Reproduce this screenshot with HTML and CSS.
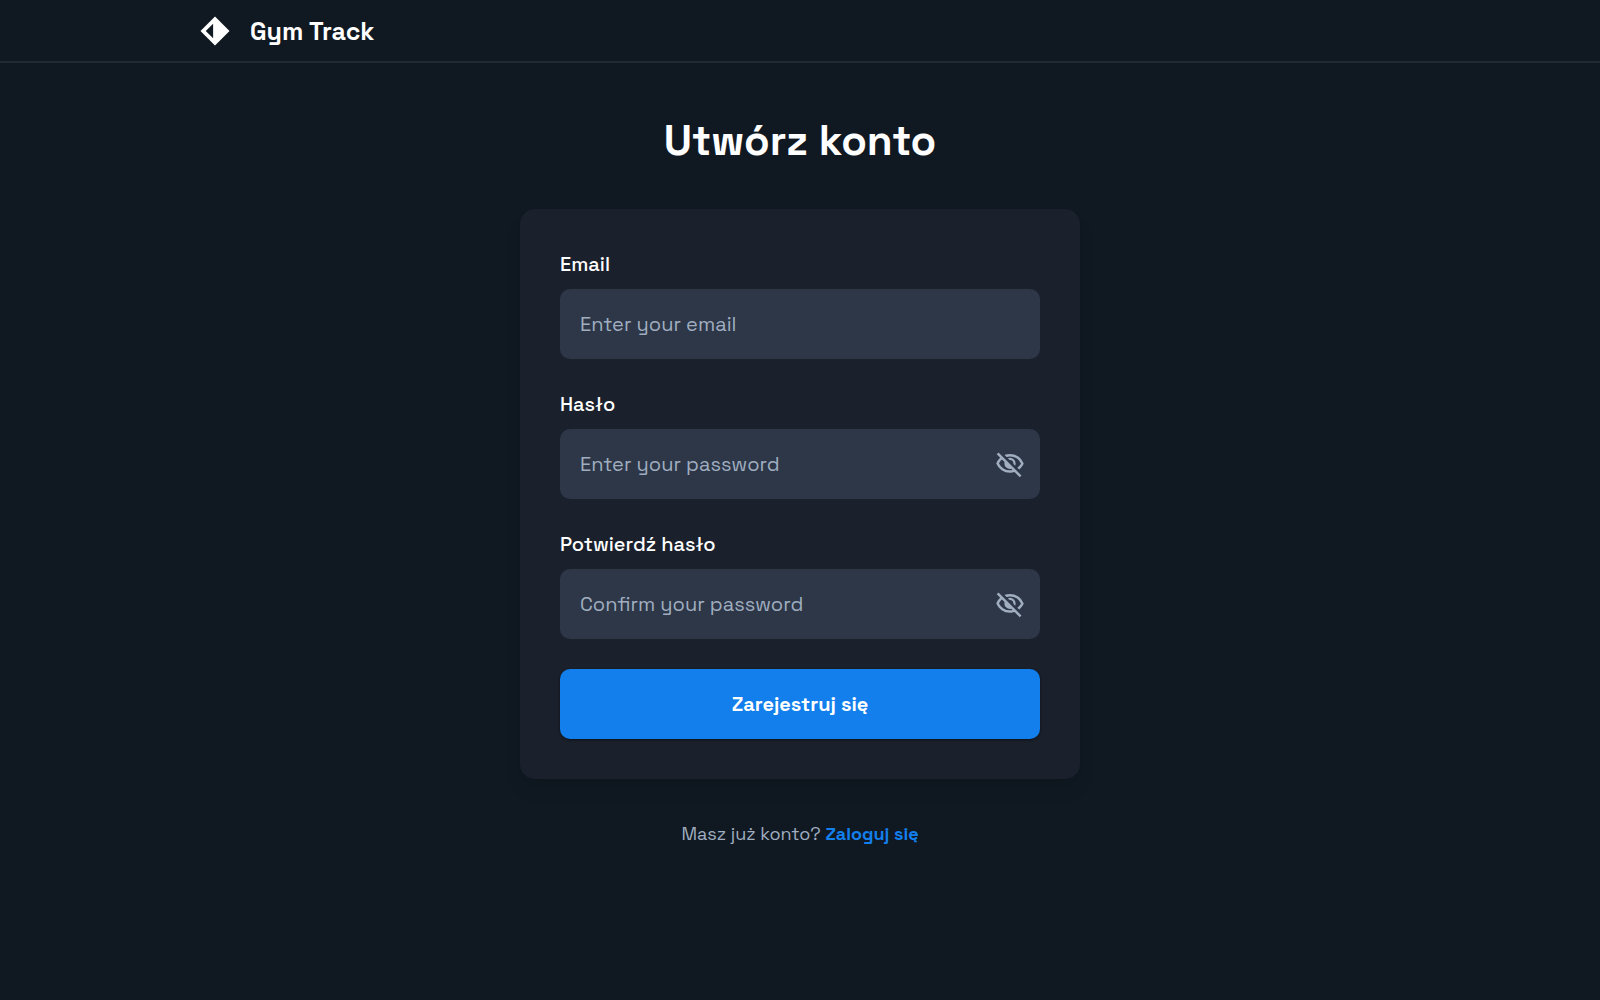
FILE: index.html
```html
<!DOCTYPE html>
<html lang="pl">
<head>
<meta charset="utf-8">
<meta name="viewport" content="width=device-width, initial-scale=1">
<title>Gym Track</title>
<link rel="stylesheet" href="styles.css">
</head>
<body>
<svg class="sprite" aria-hidden="true">
  <symbol id="eye-off" viewBox="0 -960 960 960">
    <path d="m644-428-58-58q9-47-27-88t-93-32l-58-58q17-8 34.500-12t37.500-4q75 0 127.500 52.500T660-500q0 20-4 37.500T644-428Zm128 126-58-56q38-29 67.500-63.500T832-500q-50-101-143.500-160.500T480-720q-29 0-57 4t-55 12l-62-62q41-17 84-25.500t90-8.500q151 0 269 83.500T920-500q-23 59-60.500 109.500T772-302Zm20 246L624-222q-35 11-70.500 16.500T480-200q-151 0-269-83.500T40-500q21-53 53-98.500t73-81.500L56-792l56-56 736 736-56 56ZM222-624q-29 26-53 57t-41 67q50 101 143.500 160.500T480-280q20 0 39-2.500t39-5.500l-36-38q-11 3-21 4.500t-21 1.500q-75 0-127.500-52.500T300-500q0-11 1.500-21t4.500-21l-84-82Z"/>
  </symbol>
</svg>
<header class="header">
  <div class="brand">
    <svg class="brand-logo" viewBox="0 0 48 48" aria-hidden="true"><path fill-rule="evenodd" d="M24 .76 47.240 24 24 47.240.76 24ZM21 35.760V12.240L9.240 24Z"/></svg>
    <span class="brand-name">Gym Track</span>
  </div>
</header>
<main class="main">
  <h1 class="title">Utwórz konto</h1>
  <form class="card">
    <div class="field">
      <label class="label" for="email">Email</label>
      <input class="input" id="email" type="email" placeholder="Enter your email">
    </div>
    <div class="field">
      <label class="label" for="password">Hasło</label>
      <div class="input-group">
        <input class="input" id="password" type="password" placeholder="Enter your password">
        <button class="toggle" type="button" aria-label="Pokaż hasło"><svg class="icon"><use href="#eye-off"/></svg></button>
      </div>
    </div>
    <div class="field">
      <label class="label" for="confirm">Potwierdź hasło</label>
      <div class="input-group">
        <input class="input" id="confirm" type="password" placeholder="Confirm your password">
        <button class="toggle" type="button" aria-label="Pokaż hasło"><svg class="icon"><use href="#eye-off"/></svg></button>
      </div>
    </div>
    <button class="submit" type="submit">Zarejestruj się</button>
  </form>
  <p class="signin">Masz już konto? <a class="link" href="#">Zaloguj się</a></p>
</main>
</body>
</html>
```
FILE: styles.css
```css
* {
  box-sizing: border-box;
}

body {
  margin: 0;
  min-height: 100vh;
  background: #101922;
  color: #fff;
  font-family: "Space Grotesk", Inter, sans-serif;
  font-size: 20px;
  line-height: 30px;
}

.sprite {
  display: none;
}

.header {
  padding: 16px 20px 15px;
  border-bottom: 2px solid #222932;
}

.brand {
  display: flex;
  align-items: center;
  gap: 20px;
  max-width: 1200px;
  margin: 0 auto;
}

.brand-logo {
  width: 30px;
  height: 30px;
  fill: #fff;
}

.brand-name {
  font-size: 25px;
  font-weight: 700;
}

.main {
  display: flex;
  flex-direction: column;
  align-items: center;
  padding: 50px 20px;
}

.title {
  margin: 0 0 40px;
  font-size: 42px;
  line-height: 56px;
  font-weight: 700;
}

.card {
  display: flex;
  flex-direction: column;
  gap: 30px;
  width: 100%;
  max-width: 560px;
  padding: 40px;
  border-radius: 15px;
  background: #1a202c;
  box-shadow: 0 12px 20px -4px rgb(0 0 0 / 10%), 0 5px 8px -5px rgb(0 0 0 / 10%);
}

.field {
  display: flex;
  flex-direction: column;
  gap: 10px;
}

.label {
  font-weight: 500;
}

.input-group {
  position: relative;
}

.input {
  display: block;
  width: 100%;
  height: 70px;
  padding: 0 20px;
  border: 0;
  border-radius: 10px;
  background: #2d3748;
  color: #fff;
  font: inherit;
}

.input::placeholder {
  color: #a0aec0;
  opacity: 1;
}

.toggle {
  position: absolute;
  top: 0;
  right: 0;
  display: flex;
  align-items: center;
  height: 70px;
  padding: 0 15px;
  border: 0;
  background: none;
  color: #a0aec0;
  cursor: pointer;
}

.icon {
  width: 30px;
  height: 30px;
  fill: currentColor;
}

.submit {
  height: 70px;
  border: 0;
  border-radius: 10px;
  background: #137fec;
  box-shadow: 0 1px 3px rgb(0 0 0 / 50%);
  color: #fff;
  font: inherit;
  font-weight: 700;
  cursor: pointer;
}

.signin {
  margin: 40px 0 0;
  color: #a0aec0;
  font-size: 18px;
}

.link {
  color: #137fec;
  font-weight: 700;
  text-decoration: none;
}
```
